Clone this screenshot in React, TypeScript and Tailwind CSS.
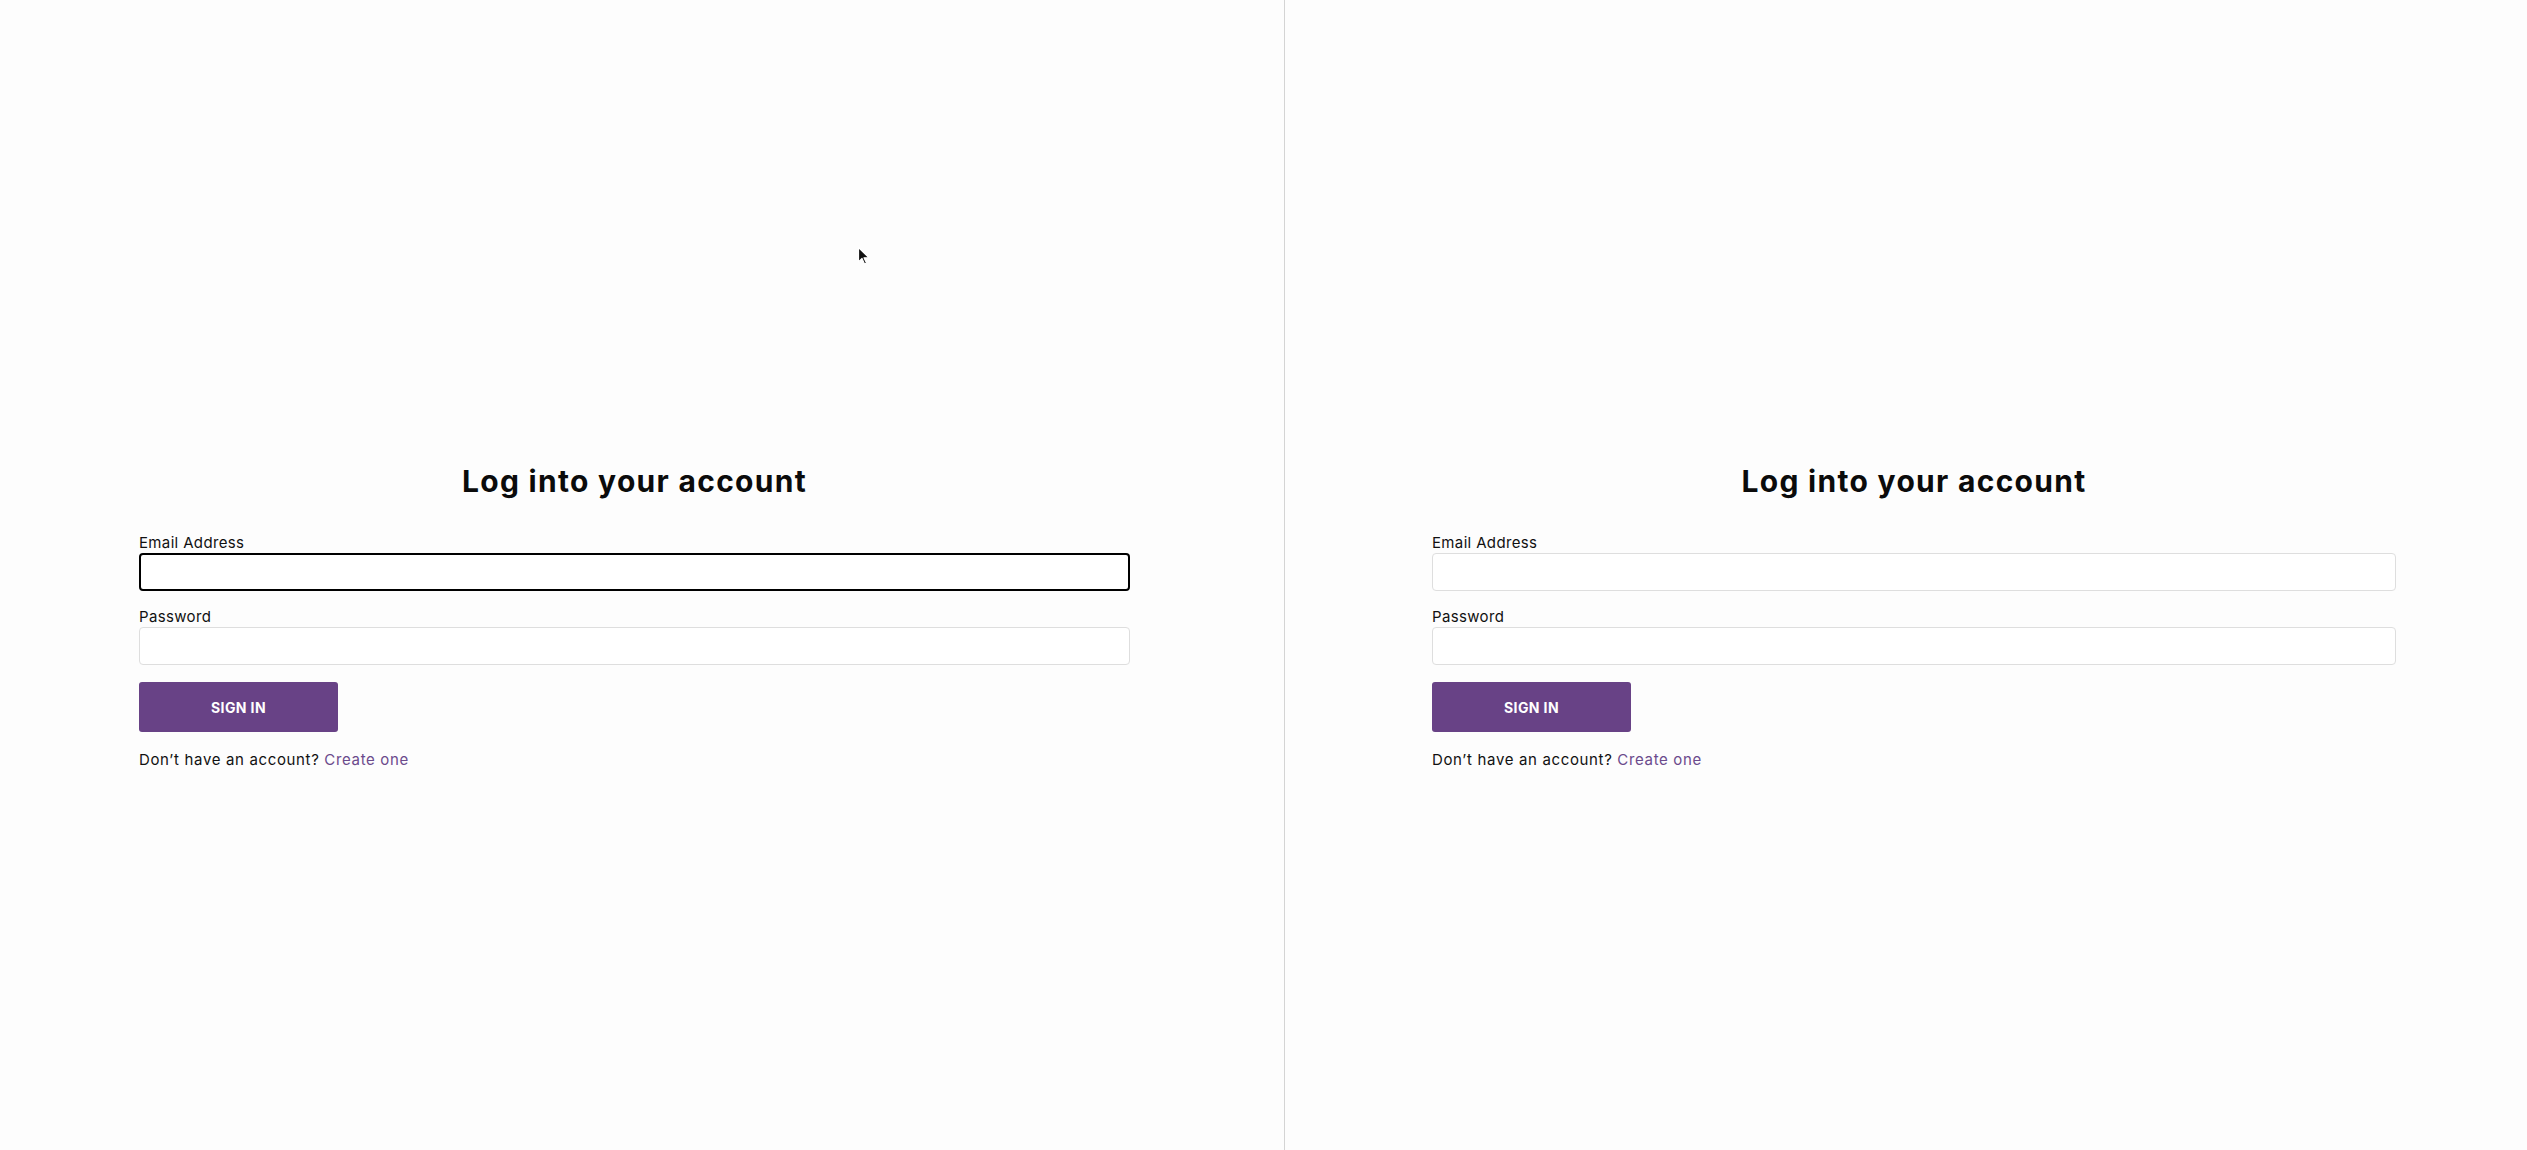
import React from "react";

const font = { fontFamily: "Inter, 'Noto Sans', sans-serif" };

type LoginPaneProps = {
  focused?: boolean;
  padding: string;
};

const LoginPane = ({ focused, padding }: LoginPaneProps) => {
  return (
    <div className={`h-full bg-[#fdfdfd] pt-[463px] ${padding}`}>
      <div className="flex flex-col">
        <h1 className="text-center text-[30px] leading-[36px] font-bold tracking-[1.3px] text-[#0b0b0b]">
          Log into your account
        </h1>
        <label className="mt-[34px] text-[15px] leading-[20px] tracking-[0.35px] text-[#111]">
          Email Address
        </label>
        <div
          className={`h-[38px] rounded-[4px] bg-white ${
            focused ? "border-2 border-black" : "border border-[#dedede]"
          }`}
        />
        <label className="mt-[16px] text-[15px] leading-[20px] tracking-[0.35px] text-[#111]">
          Password
        </label>
        <div className="h-[38px] rounded-[4px] border border-[#dedede] bg-white" />
        <div className="mt-[17px]">
          <button className="h-[50px] w-[199px] rounded-[3px] bg-[#684286] text-[14px] font-bold tracking-[0.4px] text-white">
            SIGN IN
          </button>
        </div>
        <p className="mt-[18px] text-[15px] leading-[20px] tracking-[0.65px] text-[#111]">
          Don&rsquo;t have an account?{" "}
          <a className="text-[#6b4a8c]">Create one</a>
        </p>
      </div>
    </div>
  );
};

const Cursor = () => (
  <svg
    className="absolute left-[857px] top-[246px]"
    width="14"
    height="20"
    viewBox="0 0 14 20"
  >
    <path
      d="M1.5 1.5 L1.5 16 L5 12.5 L7.5 18 L9.5 17 L7 11.8 L12 11.8 Z"
      fill="#111"
      stroke="#fff"
      strokeWidth="1.2"
      strokeLinejoin="round"
    />
  </svg>
);

export default function App() {
  return (
    <div className="relative flex h-[1150px] w-full overflow-hidden bg-[#fdfdfd]" style={font}>
      <div className="w-[1284px] shrink-0">
        <LoginPane focused padding="pl-[139px] pr-[154px]" />
      </div>
      <div className="w-px shrink-0 bg-[#d4d4d4]" />
      <div className="flex-1">
        <LoginPane padding="pl-[147px] pr-[131px]" />
      </div>
      <Cursor />
    </div>
  );
}
